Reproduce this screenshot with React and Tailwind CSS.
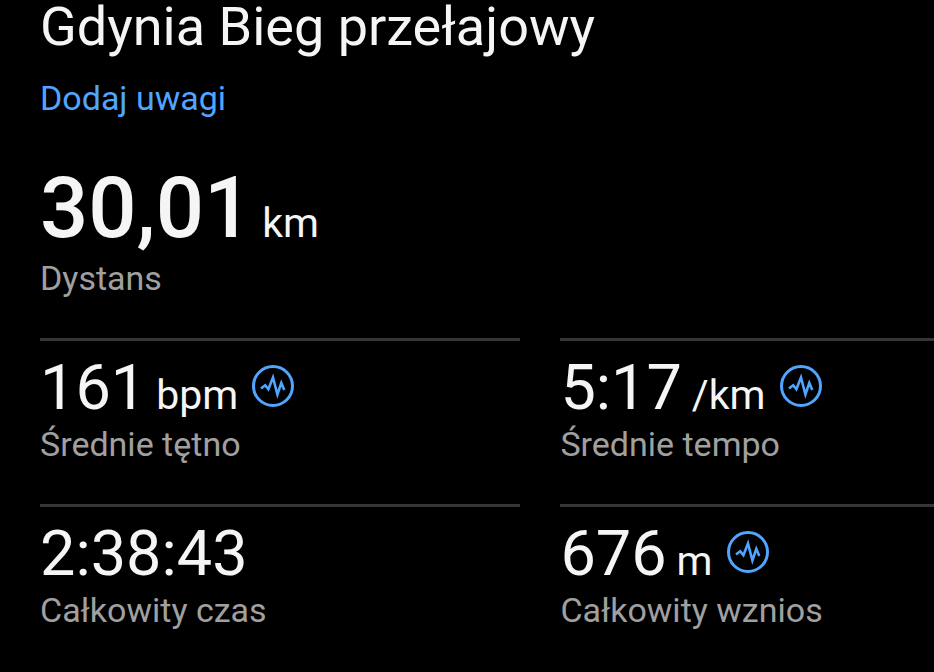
import React from "react";

const stats = [
  { value: "161", unit: "bpm", label: "Średnie tętno", chart: true },
  { value: "5:17", unit: "/km", label: "Średnie tempo", chart: true },
  { value: "2:38:43", label: "Całkowity czas" },
  { value: "676", unit: "m", label: "Całkowity wznios", chart: true },
];

const ChartIcon = () => (
  <svg viewBox="0 0 42 42" className="w-[42px] h-[42px]" fill="none" stroke="currentColor" aria-hidden="true">
    <circle cx="21" cy="21" r="19.5" strokeWidth="3" />
    <path d="M9 23.5 L13.2 20.2 L16.4 24.2 L21 12.5 L25.4 29.5 L29.3 18 L32.3 25" strokeWidth="2.6" />
  </svg>
);

const Stat = ({ value, unit, label, chart }) => (
  <div className="border-t-3 border-[#363636] pt-[11px] pb-10">
    <div className="flex items-baseline gap-[10px]">
      <span className="text-[63px] leading-[72px]">{value}</span>
      {unit && <span className="text-[41px] leading-none">{unit}</span>}
      {chart && (
        <button type="button" aria-label={label} className="ml-1 mb-1 self-center text-[#50a5ff]">
          <ChartIcon />
        </button>
      )}
    </div>
    <p className="text-[34px] leading-10 text-[#a0a0a0]">{label}</p>
  </div>
);

const App = () => {
  return (
    <div className="min-h-screen bg-black pl-10 font-['Roboto',sans-serif] text-[#f5f5f5]">
      {/* Activity title */}
      <h1 className="text-[54px] leading-[54px]">Gdynia Bieg przełajowy</h1>
      <a href="#notes" className="mt-6 block w-fit text-[34px] leading-10 text-[#50a5ff]">
        Dodaj uwagi
      </a>

      {/* Distance */}
      <div className="mt-10 flex items-baseline gap-[10px]">
        <span className="text-[85px] leading-[100px] font-medium">30,01</span>
        <span className="text-[41px] leading-none">km</span>
      </div>
      <p className="text-[34px] leading-10 text-[#a0a0a0]">Dystans</p>

      {/* Stats grid */}
      <div className="mt-10 grid grid-cols-[9fr_7fr] gap-x-10">
        {stats.map((stat) => (
          <Stat key={stat.label} {...stat} />
        ))}
      </div>
    </div>
  );
};

export default App;
